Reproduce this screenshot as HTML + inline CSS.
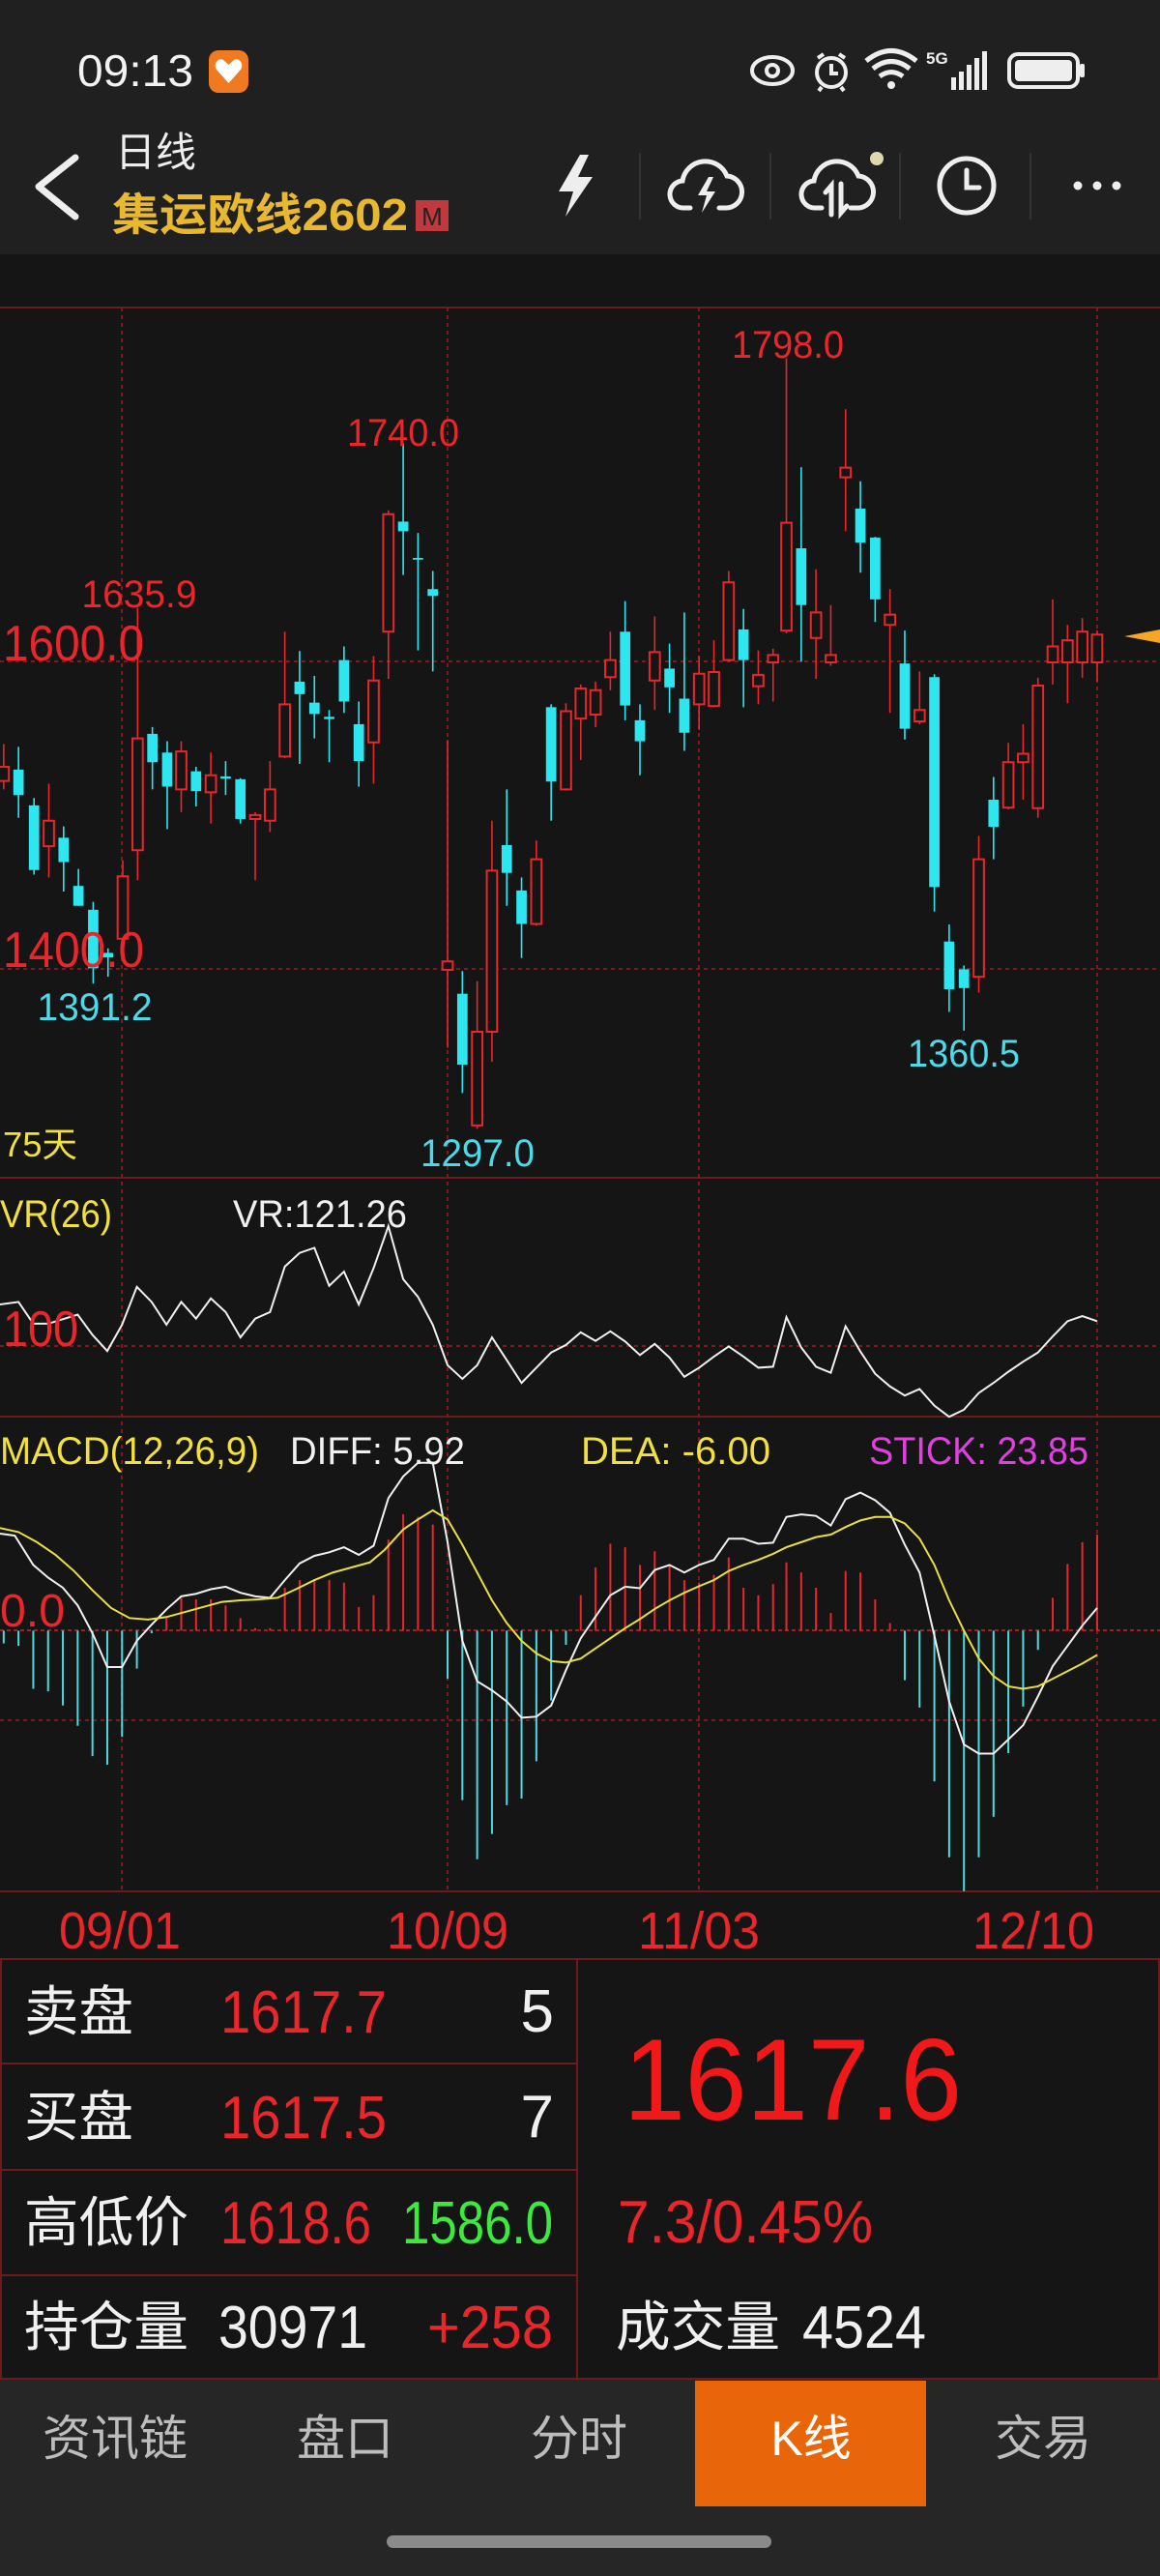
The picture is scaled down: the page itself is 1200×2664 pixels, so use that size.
<!DOCTYPE html>
<html><head><meta charset="utf-8"><style>
html,body{margin:0;padding:0;background:#151515;width:1200px;height:2664px;overflow:hidden}
svg{display:block}
text{font-family:"Liberation Sans","Noto Sans CJK SC",sans-serif}
</style></head><body>
<svg width="1200" height="2664" viewBox="0 0 1200 2664" xmlns="http://www.w3.org/2000/svg">
<rect x="0" y="0" width="1200" height="2664" fill="#151515"/>
<!-- header -->
<rect x="0" y="0" width="1200" height="263" fill="#202020"/>
<text x="80" y="89" font-size="46" fill="#f2f2f2" textLength="120" lengthAdjust="spacingAndGlyphs">09:13</text>
<rect x="216" y="52" width="41" height="44" rx="10" fill="#f07a22"/>
<path d="M236.5 86 L224 72 C220 66 226 59 231 62 L236.5 67 L242 62 C247 59 253 66 249 72 Z" fill="#fff"/>
<g fill="none" stroke="#eee" stroke-width="4">
<ellipse cx="799" cy="73" rx="21" ry="14"/><circle cx="799" cy="73" r="6"/>
<circle cx="860" cy="75" r="15"/><path d="M860 66 V76 H867"/><path d="M846 60 L852 56 M874 60 L868 56 M850 90 L847 94 M870 90 L873 94"/>
<path d="M896 63 Q922 42 948 63 M903 71 Q922 56 941 71 M910 79 Q922 70 934 79" stroke-width="5"/>
</g>
<circle cx="922" cy="88" r="4" fill="#eee"/>
<text x="958" y="66" font-size="17" font-weight="bold" fill="#eee">5G</text>
<g fill="#eee"><rect x="984" y="80" width="5" height="13"/><rect x="992" y="74" width="5" height="19"/><rect x="1000" y="67" width="5" height="26"/><rect x="1008" y="60" width="5" height="33"/><rect x="1016" y="53" width="5" height="40"/></g>
<rect x="1044" y="56" width="71" height="34" rx="9" fill="none" stroke="#eee" stroke-width="4"/>
<rect x="1050" y="62" width="59" height="22" rx="4" fill="#eee"/>
<rect x="1117" y="66" width="5" height="14" rx="2" fill="#eee"/>
<polyline points="78,163 40,193 78,224" fill="none" stroke="#eee" stroke-width="7" stroke-linecap="round" stroke-linejoin="round"/>
<text x="119" y="172" font-size="42" fill="#eeeeee">日线</text>
<text x="116" y="238" font-size="46" font-weight="bold" fill="#e8b830" textLength="306" lengthAdjust="spacingAndGlyphs">集运欧线2602</text>
<rect x="430" y="207" width="34" height="32" fill="#c0393d"/>
<text x="447" y="233" font-size="26" text-anchor="middle" fill="#222">M</text>
<path d="M600 160 L578 198 L593 198 L585 224 L613 183 L598 183 L609 160 Z" fill="#eee"/>
<g stroke="#333" stroke-width="2"><line x1="662" y1="158" x2="662" y2="227"/><line x1="797" y1="158" x2="797" y2="227"/><line x1="931" y1="158" x2="931" y2="227"/><line x1="1066" y1="158" x2="1066" y2="227"/></g>
<g fill="none" stroke="#eee" stroke-width="5" stroke-linecap="round">
<path d="M714 215 H708 A14 14 0 0 1 706 187 A24 24 0 0 1 752 182 A15 15 0 0 1 750 215 H744"/>
<path d="M850 215 H844 A14 14 0 0 1 842 187 A24 24 0 0 1 888 182 A15 15 0 0 1 886 215 H880"/>
<path d="M860 222 V192 L854 199 M870 190 V220 L876 213"/>
<circle cx="1000" cy="192" r="28"/><path d="M1000 176 V194 H1013"/>
</g>
<path d="M733 183 L722 202 L731 202 L726 220 L740 198 L731 198 L738 183 Z" fill="#eee"/>
<circle cx="907" cy="164" r="7" fill="#ddd8b0"/>
<g fill="#eee"><circle cx="1115" cy="192" r="4.5"/><circle cx="1135" cy="192" r="4.5"/><circle cx="1155" cy="192" r="4.5"/></g>

<!-- grid -->
<g stroke="#6e1a1a" stroke-width="2">
<line x1="0" y1="318" x2="1200" y2="318"/><line x1="0" y1="1218" x2="1200" y2="1218"/><line x1="0" y1="1465" x2="1200" y2="1465"/><line x1="0" y1="1956" x2="1200" y2="1956"/><line x1="0" y1="2026" x2="1200" y2="2026"/>
</g>
<g stroke="#7a1c1c" stroke-width="2" stroke-dasharray="4,4">
<line x1="0" y1="684" x2="1200" y2="684"/><line x1="0" y1="1002" x2="1200" y2="1002"/><line x1="0" y1="1392" x2="1200" y2="1392"/><line x1="0" y1="1779" x2="1200" y2="1779"/>
<line x1="126" y1="318" x2="126" y2="1956"/><line x1="463" y1="318" x2="463" y2="1956"/><line x1="723" y1="318" x2="723" y2="1956"/><line x1="1135" y1="318" x2="1135" y2="1956"/>
</g>
<line x1="0" y1="1686" x2="1200" y2="1686" stroke="#a02020" stroke-width="2" stroke-dasharray="4,3"/>

<g transform="translate(0,300) scale(0.76531,0.58685)">
<g stroke="#e8262b" fill="#151515">
<path vector-effect="non-scaling-stroke" stroke-width="1.6" d="M5 800V880M66 870V1035M166 1005V1150M186 560V1040M245 795V920M285 815V940M345 920V1040M365 830V955M385 602V825M505 645V870M525 388V685M605 793V1335M645 1218V1478M665 935V1360M725 970V1120M765 728V882M785 695V828M805 690V770M825 602V705M885 575V740M945 645V775M965 617V735M985 495V655M1025 635V730M1045 632V725M1063 120V605M1103 492V685M1123 555V662M1143 210V425M1203 527V745M1243 672V765M1323 962V1238M1363 798V915M1383 765V898M1403 683V930M1423 545V695M1443 590V728M1463 578V683M1483 600V690"/>
<g stroke-width="2">
<rect vector-effect="non-scaling-stroke" x="-2" y="840" width="14" height="25"/>
<rect vector-effect="non-scaling-stroke" x="59" y="935" width="14" height="45"/>
<rect vector-effect="non-scaling-stroke" x="159" y="1033" width="14" height="110"/>
<rect vector-effect="non-scaling-stroke" x="179" y="790" width="14" height="197"/>
<rect vector-effect="non-scaling-stroke" x="238" y="813" width="14" height="67"/>
<rect vector-effect="non-scaling-stroke" x="278" y="855" width="14" height="30"/>
<rect vector-effect="non-scaling-stroke" x="338" y="925" width="14" height="7"/>
<rect vector-effect="non-scaling-stroke" x="358" y="880" width="14" height="55"/>
<rect vector-effect="non-scaling-stroke" x="378" y="730" width="14" height="92"/>
<rect vector-effect="non-scaling-stroke" x="498" y="688" width="14" height="109"/>
<rect vector-effect="non-scaling-stroke" x="518" y="395" width="14" height="207"/>
<rect vector-effect="non-scaling-stroke" x="598" y="1183" width="14" height="15"/>
<rect vector-effect="non-scaling-stroke" x="638" y="1307" width="14" height="165"/>
<rect vector-effect="non-scaling-stroke" x="658" y="1023" width="14" height="284"/>
<rect vector-effect="non-scaling-stroke" x="718" y="1003" width="14" height="114"/>
<rect vector-effect="non-scaling-stroke" x="758" y="742" width="14" height="138"/>
<rect vector-effect="non-scaling-stroke" x="778" y="702" width="14" height="53"/>
<rect vector-effect="non-scaling-stroke" x="798" y="705" width="14" height="43"/>
<rect vector-effect="non-scaling-stroke" x="818" y="652" width="14" height="30"/>
<rect vector-effect="non-scaling-stroke" x="878" y="638" width="14" height="50"/>
<rect vector-effect="non-scaling-stroke" x="938" y="676" width="14" height="54"/>
<rect vector-effect="non-scaling-stroke" x="958" y="673" width="14" height="60"/>
<rect vector-effect="non-scaling-stroke" x="978" y="515" width="14" height="137"/>
<rect vector-effect="non-scaling-stroke" x="1018" y="678" width="14" height="20"/>
<rect vector-effect="non-scaling-stroke" x="1038" y="643" width="14" height="13"/>
<rect vector-effect="non-scaling-stroke" x="1056" y="410" width="14" height="190"/>
<rect vector-effect="non-scaling-stroke" x="1096" y="568" width="14" height="45"/>
<rect vector-effect="non-scaling-stroke" x="1116" y="643" width="14" height="13"/>
<rect vector-effect="non-scaling-stroke" x="1136" y="313" width="14" height="17"/>
<rect vector-effect="non-scaling-stroke" x="1196" y="572" width="14" height="18"/>
<rect vector-effect="non-scaling-stroke" x="1236" y="740" width="14" height="20"/>
<rect vector-effect="non-scaling-stroke" x="1316" y="1003" width="14" height="207"/>
<rect vector-effect="non-scaling-stroke" x="1356" y="832" width="14" height="80"/>
<rect vector-effect="non-scaling-stroke" x="1376" y="817" width="14" height="15"/>
<rect vector-effect="non-scaling-stroke" x="1396" y="697" width="14" height="216"/>
<rect vector-effect="non-scaling-stroke" x="1416" y="628" width="14" height="28"/>
<rect vector-effect="non-scaling-stroke" x="1436" y="617" width="14" height="39"/>
<rect vector-effect="non-scaling-stroke" x="1456" y="602" width="14" height="54"/>
<rect vector-effect="non-scaling-stroke" x="1476" y="607" width="14" height="49"/>
</g></g>
<g fill="#2ee6f0">
<path vector-effect="non-scaling-stroke" stroke="#2ee6f0" stroke-width="1.6" fill="none" d="M25 805V930M46 895V1030M86 945V1060M106 1020V1085M126 1078V1222M146 1160V1210M206 770V880M226 795V950M265 840V910M305 830V890M325 860V940M405 636V835M425 680V790M445 740V832M465 628V745M485 725V875M545 270V502M565 428V635M585 495V672M625 1200V1415M685 880V1085M705 1035V1177M745 730V935M845 548V758M865 730V855M905 623V745M925 568V812M1005 562V735M1083 312V655M1163 337V498M1183 435V585M1223 600V792M1263 677V1095M1283 1118V1272M1303 1190V1305M1343 858V1003"/>
<rect x="18" y="845" width="14" height="45"/><rect x="39" y="908" width="14" height="114"/><rect x="79" y="965" width="14" height="43"/><rect x="99" y="1050" width="14" height="35"/><rect x="119" y="1092" width="14" height="103"/><rect x="139" y="1168" width="14" height="8"/><rect x="199" y="782" width="14" height="50"/><rect x="219" y="815" width="14" height="60"/><rect x="258" y="848" width="14" height="35"/><rect x="298" y="857" width="14" height="4"/><rect x="318" y="862" width="14" height="70"/><rect x="398" y="690" width="14" height="22"/><rect x="418" y="727" width="14" height="20"/><rect x="438" y="752" width="14" height="4"/><rect x="458" y="652" width="14" height="73"/><rect x="478" y="765" width="14" height="65"/><rect x="538" y="408" width="14" height="17"/><rect x="558" y="472" width="14" height="3"/><rect x="578" y="527" width="14" height="12"/><rect x="618" y="1240" width="14" height="125"/><rect x="678" y="978" width="14" height="49"/><rect x="698" y="1058" width="14" height="59"/><rect x="738" y="735" width="14" height="131"/><rect x="838" y="602" width="14" height="130"/><rect x="858" y="758" width="14" height="37"/><rect x="898" y="667" width="14" height="33"/><rect x="918" y="720" width="14" height="60"/><rect x="998" y="598" width="14" height="54"/><rect x="1076" y="455" width="14" height="100"/><rect x="1156" y="385" width="14" height="60"/><rect x="1176" y="436" width="14" height="109"/><rect x="1216" y="658" width="14" height="115"/><rect x="1256" y="682" width="14" height="370"/><rect x="1276" y="1148" width="14" height="84"/><rect x="1296" y="1197" width="14" height="33"/><rect x="1336" y="898" width="14" height="48"/>
</g>
</g>

<g transform="translate(0,1200) scale(0.76531,0.52301)" fill="none">
<polyline vector-effect="non-scaling-stroke" stroke="#f0f0f0" stroke-width="2" points="0,285 25,280 45,323 65,323 105,305 125,345 145,377 165,325 185,250 205,280 225,325 245,280 265,313 285,273 305,300 325,350 345,313 365,300 385,210 405,183 425,173 445,248 465,220 485,285 505,213 525,130 545,235 565,270 585,325 605,405 625,432 645,405 665,350 685,395 705,440 725,410 745,380 765,365 785,340 805,357 825,338 845,358 865,385 885,363 905,390 925,428 945,410 965,388 985,368 1005,388 1025,410 1045,408 1063,310 1083,370 1103,408 1123,420 1143,328 1163,378 1183,422 1203,447 1223,465 1243,452 1263,485 1283,507 1303,493 1323,460 1343,440 1363,418 1383,398 1403,380 1423,348 1443,318 1463,308 1483,318"/>
<path vector-effect="non-scaling-stroke" stroke="#4fd8e0" stroke-width="2" d="M5 930V955M25 930V960M45 930V1045M65 930V1050M85 930V1078M105 930V1118M125 930V1178M145 930V1195M165 930V1140M185 930V1005M205 930V935M605 930V1025M625 930V1265M645 930V1382M665 930V1332M685 930V1275M705 930V1262M725 930V1188M745 930V1068M765 930V958M1223 930V1028M1243 930V1082M1263 930V1228M1283 930V1378M1303 930V1445M1323 930V1378M1343 930V1298M1363 930V1172M1383 930V1080M1403 930V968"/>
<path vector-effect="non-scaling-stroke" stroke="#e8262b" stroke-width="2" d="M225 930V905M245 930V865M265 930V868M285 930V868M305 930V880M325 930V905M345 930V925M365 930V925M385 930V845M405 930V830M425 930V828M445 930V830M465 930V835M485 930V883M505 930V860M525 930V750M545 930V700M565 930V705M585 930V720M785 930V860M805 930V805M825 930V758M845 930V765M865 930V800M885 930V773M905 930V800M925 930V830M945 930V835M965 930V820M985 930V785M1005 930V845M1025 930V860M1045 930V838M1063 930V795M1083 930V815M1103 930V845M1123 930V895M1143 930V812M1163 930V815M1183 930V868M1203 930V915M1423 930V865M1443 930V798M1463 930V755M1483 930V740"/>
<polyline vector-effect="non-scaling-stroke" stroke="#f0f0f0" stroke-width="2" points="0,738 20,742 45,800 65,825 85,845 105,880 125,935 145,1002 165,1002 185,950 205,918 225,888 245,862 265,857 285,848 305,843 325,855 345,862 365,865 385,830 405,797 425,782 445,775 465,765 485,780 505,762 525,668 545,625 565,598 585,598 605,755 625,950 645,1030 665,1048 685,1070 705,1102 725,1100 745,1078 765,1008 785,945 805,902 825,860 845,843 865,846 885,810 905,800 925,815 945,800 965,790 985,748 1005,748 1025,758 1045,756 1063,705 1083,700 1103,703 1123,722 1143,670 1163,657 1183,672 1203,697 1223,760 1243,815 1263,940 1283,1070 1303,1155 1323,1173 1343,1173 1363,1145 1383,1117 1403,1060 1423,1000 1443,960 1463,920 1483,885"/>
<polyline vector-effect="non-scaling-stroke" stroke="#e8e040" stroke-width="2" points="0,727 25,735 50,755 75,780 100,812 125,850 150,885 175,905 200,908 225,903 250,893 275,883 300,873 325,870 350,868 375,865 400,848 425,830 450,815 475,805 500,795 520,770 545,730 565,710 585,692 605,710 625,760 645,815 665,870 685,915 705,950 725,975 745,990 765,993 785,985 805,965 825,945 845,925 865,907 885,887 905,870 925,855 945,842 965,830 985,812 1005,800 1025,790 1045,778 1063,765 1083,755 1103,745 1123,740 1143,725 1163,712 1183,705 1203,705 1223,718 1243,748 1263,800 1283,870 1303,930 1323,985 1343,1020 1363,1040 1383,1045 1403,1040 1423,1025 1443,1010 1463,995 1483,978"/>
</g>
<polygon points="1200,651 1163,658 1200,665" fill="#f5a623"/>

<g font-size="40" fill="#e8262b" text-anchor="middle">
<text x="815" y="370" textLength="116" lengthAdjust="spacingAndGlyphs">1798.0</text>
<text x="417" y="461" textLength="116" lengthAdjust="spacingAndGlyphs">1740.0</text>
<text x="144" y="628" textLength="119" lengthAdjust="spacingAndGlyphs">1635.9</text>
</g>
<g font-size="52" fill="#e8262b">
<text x="3" y="683" textLength="146" lengthAdjust="spacingAndGlyphs">1600.0</text>
<text x="3" y="1000" textLength="146" lengthAdjust="spacingAndGlyphs">1400.0</text>
<text x="3" y="1392" textLength="78" lengthAdjust="spacingAndGlyphs">100</text>
</g>
<g font-size="40" fill="#4fd8e8" text-anchor="middle">
<text x="98" y="1055" textLength="119" lengthAdjust="spacingAndGlyphs">1391.2</text>
<text x="494" y="1206" textLength="118" lengthAdjust="spacingAndGlyphs">1297.0</text>
<text x="997" y="1103" textLength="116" lengthAdjust="spacingAndGlyphs">1360.5</text>
</g>
<text x="3" y="1196" font-size="36" fill="#f0e040" textLength="77" lengthAdjust="spacingAndGlyphs">75天</text>
<text x="0" y="1269" font-size="40" fill="#f0e040" textLength="116" lengthAdjust="spacingAndGlyphs">VR(26)</text>
<text x="241" y="1269" font-size="40" fill="#f0f0f0" textLength="180" lengthAdjust="spacingAndGlyphs">VR:121.26</text>
<g font-size="40">
<text x="0" y="1514" fill="#f0e040" textLength="268" lengthAdjust="spacingAndGlyphs">MACD(12,26,9)</text>
<text x="300" y="1514" fill="#f0f0f0" textLength="181" lengthAdjust="spacingAndGlyphs">DIFF: 5.92</text>
<text x="601" y="1514" fill="#f0e040" textLength="196" lengthAdjust="spacingAndGlyphs">DEA: -6.00</text>
<text x="899" y="1514" fill="#e040e0" textLength="227" lengthAdjust="spacingAndGlyphs">STICK: 23.85</text>
</g>
<text x="0" y="1682" font-size="48" fill="#e8262b" textLength="67" lengthAdjust="spacingAndGlyphs">0.0</text>
<g font-size="54" fill="#e8262b" text-anchor="middle">
<text x="124" y="2015" textLength="126" lengthAdjust="spacingAndGlyphs">09/01</text>
<text x="463" y="2015" textLength="126" lengthAdjust="spacingAndGlyphs">10/09</text>
<text x="723" y="2015" textLength="126" lengthAdjust="spacingAndGlyphs">11/03</text>
<text x="1069" y="2015" textLength="126" lengthAdjust="spacingAndGlyphs">12/10</text>
</g>

<g stroke="#6e1a1a" stroke-width="2">
<line x1="0" y1="2134" x2="597" y2="2134"/><line x1="0" y1="2244" x2="597" y2="2244"/><line x1="0" y1="2353" x2="597" y2="2353"/><line x1="0" y1="2460" x2="1200" y2="2460"/>
<line x1="597" y1="2026" x2="597" y2="2460"/><line x1="1" y1="2026" x2="1" y2="2460"/><line x1="1199" y1="2026" x2="1199" y2="2460"/>
</g>
<g font-size="56" fill="#f0f0f0">
<text x="25" y="2100" textLength="113" lengthAdjust="spacingAndGlyphs">卖盘</text>
<text x="25" y="2209" textLength="113" lengthAdjust="spacingAndGlyphs">买盘</text>
<text x="25" y="2318" textLength="170" lengthAdjust="spacingAndGlyphs">高低价</text>
<text x="25" y="2426" textLength="170" lengthAdjust="spacingAndGlyphs">持仓量</text>
<text x="637" y="2426" textLength="170" lengthAdjust="spacingAndGlyphs">成交量</text>
</g>
<g font-size="62" fill="#f0f0f0">
<text x="573" y="2101" text-anchor="end">5</text>
<text x="573" y="2210" text-anchor="end">7</text>
<text x="226" y="2428" textLength="154" lengthAdjust="spacingAndGlyphs">30971</text>
<text x="830" y="2428" textLength="128" lengthAdjust="spacingAndGlyphs">4524</text>
</g>
<g font-size="62" fill="#e8262b">
<text x="228" y="2102" textLength="172" lengthAdjust="spacingAndGlyphs">1617.7</text>
<text x="228" y="2211" textLength="172" lengthAdjust="spacingAndGlyphs">1617.5</text>
<text x="228" y="2320" textLength="156" lengthAdjust="spacingAndGlyphs">1618.6</text>
<text x="442" y="2428" textLength="130" lengthAdjust="spacingAndGlyphs">+258</text>
<text x="639" y="2319" textLength="264" lengthAdjust="spacingAndGlyphs">7.3/0.45%</text>
</g>
<text x="416" y="2320" font-size="62" fill="#3ee83e" textLength="156" lengthAdjust="spacingAndGlyphs">1586.0</text>
<text x="645" y="2192" font-size="120" fill="#f01818" textLength="350" lengthAdjust="spacingAndGlyphs">1617.6</text>

<rect x="0" y="2461" width="1200" height="203" fill="#262626"/>
<rect x="719" y="2462" width="239" height="130" fill="#e8650a"/>
<g font-size="50" fill="#bdbdbd" text-anchor="middle">
<text x="119" y="2539">资讯链</text>
<text x="357" y="2539">盘口</text>
<text x="599" y="2539">分时</text>
<text x="839" y="2539" fill="#ffffff">K线</text>
<text x="1079" y="2539">交易</text>
</g>
<rect x="400" y="2622" width="398" height="13" rx="6.5" fill="#8a8a8a"/>
</svg>
</body></html>
